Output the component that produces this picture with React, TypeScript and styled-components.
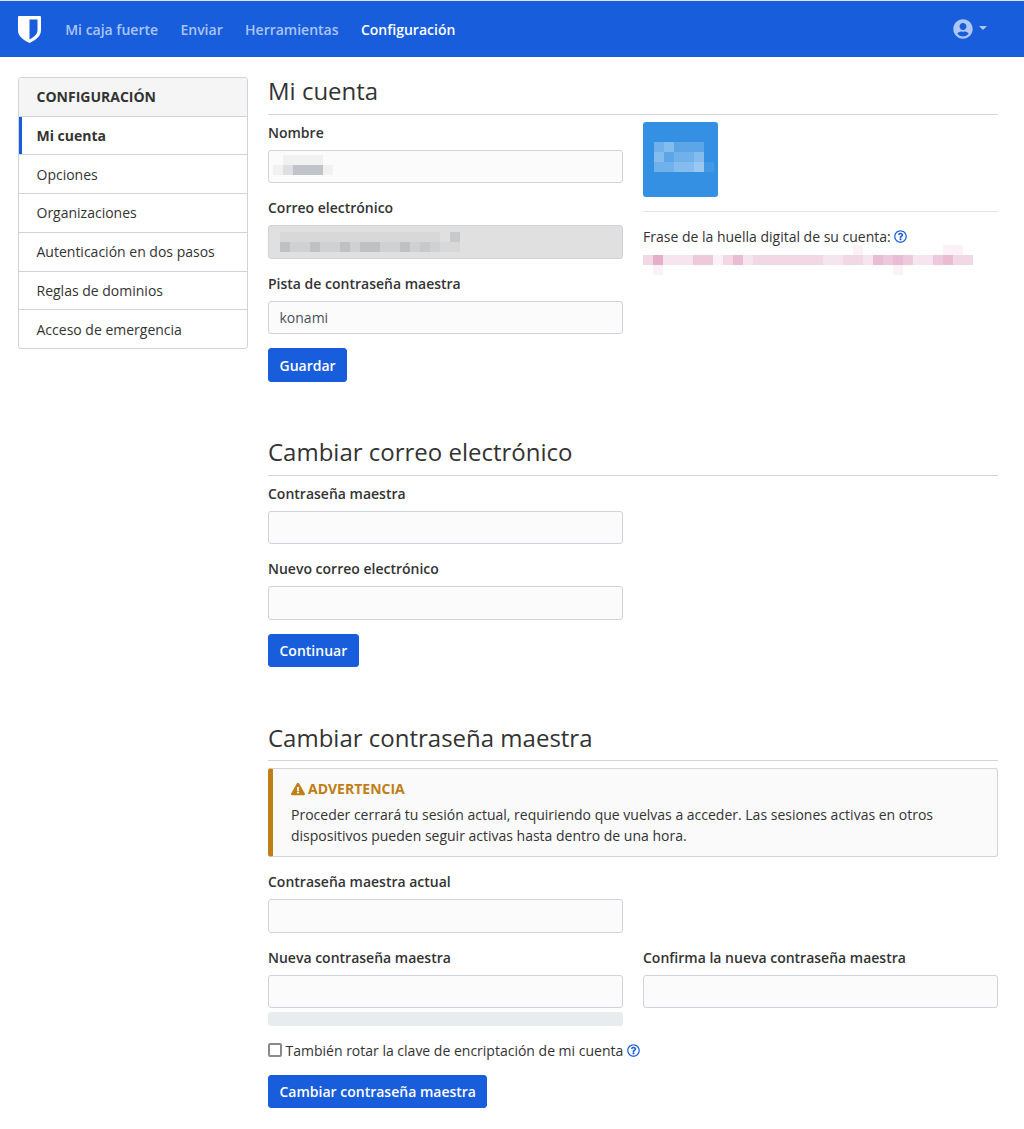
import React from 'react'
import styled, { createGlobalStyle } from 'styled-components'
import { FaExclamationTriangle, FaRegQuestionCircle, FaUserCircle } from 'react-icons/fa'

const GlobalStyle = createGlobalStyle`
  html { font-size: 14px; }
  body {
    margin: 0;
    background: #fff;
    color: #333;
    font-family: "Open Sans", "Liberation Sans", sans-serif;
    font-size: 14px;
    line-height: 1.5;
  }
  * { box-sizing: border-box; }
`

const Navbar = styled.nav`
  display: flex;
  align-items: center;
  height: 57px;
  padding: 0 37px 0 18px;
  background: #175ddc;
  border-top: 1px solid #dbe6f9;
`

const Brand = styled.a`
  display: flex;
  margin-right: 13px;
`

const NavLink = styled.a<{ $active?: boolean }>`
  padding: 0 11.2px;
  font-weight: 600;
  color: ${p => (p.$active ? '#fff' : 'rgba(255, 255, 255, 0.65)')};
`

const UserMenu = styled.div`
  display: flex;
  align-items: center;
  gap: 6px;
  margin-left: auto;
  color: rgba(255, 255, 255, 0.65);
  font-size: 20px;
`

const Caret = styled.span`
  width: 0;
  height: 0;
  margin-bottom: 3px;
  border-top: 4px solid rgba(255, 255, 255, 0.65);
  border-left: 4px solid transparent;
  border-right: 4px solid transparent;
`

const Page = styled.div`
  display: grid;
  grid-template-columns: 230px 730px;
  gap: 20px;
  align-items: start;
  padding: 20px 0 21px 18px;
`

const SideCard = styled.aside`
  border: 1px solid #ced4da;
  border-radius: 3px;
  overflow: hidden;
`

const SideHeader = styled.div`
  padding: 8px 17.5px 8.5px;
  background: #f5f5f5;
  border-bottom: 1px solid #ced4da;
  font-weight: 700;
  text-transform: uppercase;
`

const SideItem = styled.a<{ $active?: boolean }>`
  display: block;
  padding: 8.4px 17.5px;
  border-bottom: 1px solid #ced4da;
  font-weight: ${p => (p.$active ? 700 : 400)};
  box-shadow: ${p => (p.$active ? 'inset 3px 0 0 #175ddc' : 'none')};
  &:last-child { border-bottom: 0; }
`

const Main = styled.main`
  min-width: 0;
`

const Section = styled.section`
  & + & { margin-top: 56px; }
  & + & + & { margin-top: 56.5px; }
`

const Title = styled.h1<{ $tight?: boolean }>`
  margin: 0 0 6.8px;
  padding-bottom: ${p => (p.$tight ? 8.5 : 9)}px;
  border-bottom: 1px solid #d5d5d5;
  font-size: 24px;
  font-weight: 400;
  line-height: 28px;
`

const TwoCols = styled.div`
  display: grid;
  grid-template-columns: 355px 355px;
  column-gap: 20px;
`

const Field = styled.div`
  position: relative;
  margin-bottom: 14px;
`

const Label = styled.label`
  display: block;
  margin-bottom: 7px;
  font-weight: 600;
`

const Input = styled.input`
  display: block;
  width: 100%;
  height: 33.5px;
  padding: 5.25px 10.5px;
  background: #fbfbfb;
  border: 1px solid #ced4da;
  border-radius: 3px;
  color: #495057;
  font: inherit;
  &:disabled { background: #e0e0e0; }
`

const Censor = styled.div<{ $left: number; $top: number }>`
  position: absolute;
  left: ${p => p.$left}px;
  top: ${p => p.$top}px;
  display: flex;
`

const Button = styled.button`
  display: block;
  height: 33.5px;
  padding: 0 10.5px;
  background: #175ddc;
  border: 1px solid #175ddc;
  border-radius: 3px;
  color: #fff;
  font: inherit;
  font-weight: 600;
`

const Avatar = styled.svg`
  display: block;
`

const Divider = styled.hr`
  margin: 14px 0;
  border: 0;
  border-top: 1px solid #e3e3e3;
`

const FingerprintLabel = styled.div`
  display: flex;
  align-items: center;
  gap: 3.5px;
`

const Help = styled(FaRegQuestionCircle)`
  flex: none;
  color: #175ddc;
  font-size: 13px;
`

const Fingerprint = styled.svg`
  display: block;
  margin-top: -2px;
`

const Callout = styled.div`
  margin-bottom: 14.4px;
  padding: 9.5px 14px 10px 18px;
  background: #fafafa;
  border: 1px solid #d5d5d5;
  border-left: 5px solid #bf7e16;
  border-radius: 3px;
`

const CalloutTitle = styled.div`
  display: flex;
  align-items: center;
  gap: 3px;
  margin-bottom: 4.5px;
  color: #bf7e16;
  font-weight: 700;
  text-transform: uppercase;
`

const Progress = styled.div`
  height: 14px;
  margin-top: 3.5px;
  background: #e9ecef;
  border-radius: 3px;
`

const CheckRow = styled.label`
  display: flex;
  align-items: center;
  gap: 3.5px;
  margin-bottom: 14px;
`

const Check = styled.input`
  width: 14px;
  height: 14px;
  margin: 0;
  appearance: none;
  background: #fff;
  border: 2px solid #8a8a8a;
  border-radius: 2px;
`

function Pixels({ rows, color }: { rows: string[]; color: string }) {
  return (
    <>
      {rows.flatMap((row, y) =>
        row.split('').map((v, x) =>
          v === '.' ? null : (
            <rect key={`${x}-${y}`} x={x * 10} y={y * 10} width={10} height={10} fill={color} opacity={Number(v) / 10} />
          )
        )
      )}
    </>
  )
}

function Blur({ rows, color, width }: { rows: string[]; color: string; width: number }) {
  return (
    <svg width={width} height={rows.length * 10}>
      <Pixels rows={rows} color={color} />
    </svg>
  )
}

const sideItems = ['Opciones', 'Organizaciones', 'Autenticación en dos pasos', 'Reglas de dominios', 'Acceso de emergencia']

const fingerprintRows = [
  '.....................1........11.',
  '362224413523333333223325454224533',
  '.1.......................1.......',
]

export default function App() {
  return (
    <>
      <GlobalStyle />
      <Navbar>
        <Brand>
          <svg width="23" height="27" viewBox="0 0 23 27">
            <path fill="#fff" d="M1 0h21a1 1 0 0 1 1 1v13c0 3-1.2 5.500-3.200 7.600C17.800 23.800 14.800 25.600 11.500 27 8.200 25.600 5.200 23.800 3.200 21.600 1.200 19.500 0 17 0 14V1a1 1 0 0 1 1-1z" />
            <path fill="#175ddc" d="M11.500 3.500H19.500V14c0 2.200-.9 4-2.400 5.600-1.500 1.500-3.500 2.900-5.600 3.900z" />
          </svg>
        </Brand>
        <NavLink>Mi caja fuerte</NavLink>
        <NavLink>Enviar</NavLink>
        <NavLink>Herramientas</NavLink>
        <NavLink $active>Configuración</NavLink>
        <UserMenu>
          <FaUserCircle />
          <Caret />
        </UserMenu>
      </Navbar>
      <Page>
        <SideCard>
          <SideHeader>Configuración</SideHeader>
          <SideItem $active>Mi cuenta</SideItem>
          {sideItems.map(item => (
            <SideItem key={item}>{item}</SideItem>
          ))}
        </SideCard>
        <Main>
          <Section>
            <Title>Mi cuenta</Title>
            <TwoCols>
              <div>
                <Field>
                  <Label>Nombre</Label>
                  <Input />
                  <Censor $left={5} $top={33}>
                    <Blur width={60} color="#9aa0a6" rows={['.1111.', '136661']} />
                  </Censor>
                </Field>
                <Field>
                  <Label>Correo electrónico</Label>
                  <Input disabled />
                  <Censor $left={12} $top={35}>
                    <Blur width={190} color="#8f9499" rows={['1111111111111111.3.', '4224224244224232110']} />
                  </Censor>
                </Field>
                <Field>
                  <Label>Pista de contraseña maestra</Label>
                  <Input defaultValue="konami" />
                </Field>
                <Button>Guardar</Button>
              </div>
              <div>
                <Avatar width="75" height="75" viewBox="0 0 75 75">
                  <rect width="75" height="75" rx="3" fill="#3490e3" />
                  <g transform="translate(11 20)">
                    <Pixels color="#fff" rows={['34222', '42334', '33445']} />
                    <rect x="50" y="20" width="10" height="10" fill="#fff" opacity="0.08" />
                  </g>
                </Avatar>
                <Divider />
                <FingerprintLabel>
                  Frase de la huella digital de su cuenta: <Help />
                </FingerprintLabel>
                <Fingerprint width="330" height="30" viewBox="0 0 330 30">
                  <Pixels color="#d479a8" rows={fingerprintRows} />
                </Fingerprint>
              </div>
            </TwoCols>
          </Section>
          <Section>
            <Title>Cambiar correo electrónico</Title>
            <TwoCols>
              <div>
                <Field>
                  <Label>Contraseña maestra</Label>
                  <Input type="password" />
                </Field>
                <Field>
                  <Label>Nuevo correo electrónico</Label>
                  <Input />
                </Field>
                <Button>Continuar</Button>
              </div>
            </TwoCols>
          </Section>
          <Section>
            <Title $tight>Cambiar contraseña maestra</Title>
            <Callout>
              <CalloutTitle>
                <FaExclamationTriangle />
                Advertencia
              </CalloutTitle>
              Proceder cerrará tu sesión actual, requiriendo que vuelvas a acceder. Las sesiones activas en otros
              dispositivos pueden seguir activas hasta dentro de una hora.
            </Callout>
            <TwoCols>
              <Field>
                <Label>Contraseña maestra actual</Label>
                <Input type="password" />
              </Field>
              <div />
              <Field>
                <Label>Nueva contraseña maestra</Label>
                <Input type="password" />
                <Progress />
              </Field>
              <Field>
                <Label>Confirma la nueva contraseña maestra</Label>
                <Input type="password" />
              </Field>
            </TwoCols>
            <CheckRow>
              <Check type="checkbox" />
              También rotar la clave de encriptación de mi cuenta <Help />
            </CheckRow>
            <Button>Cambiar contraseña maestra</Button>
          </Section>
        </Main>
      </Page>
    </>
  )
}
